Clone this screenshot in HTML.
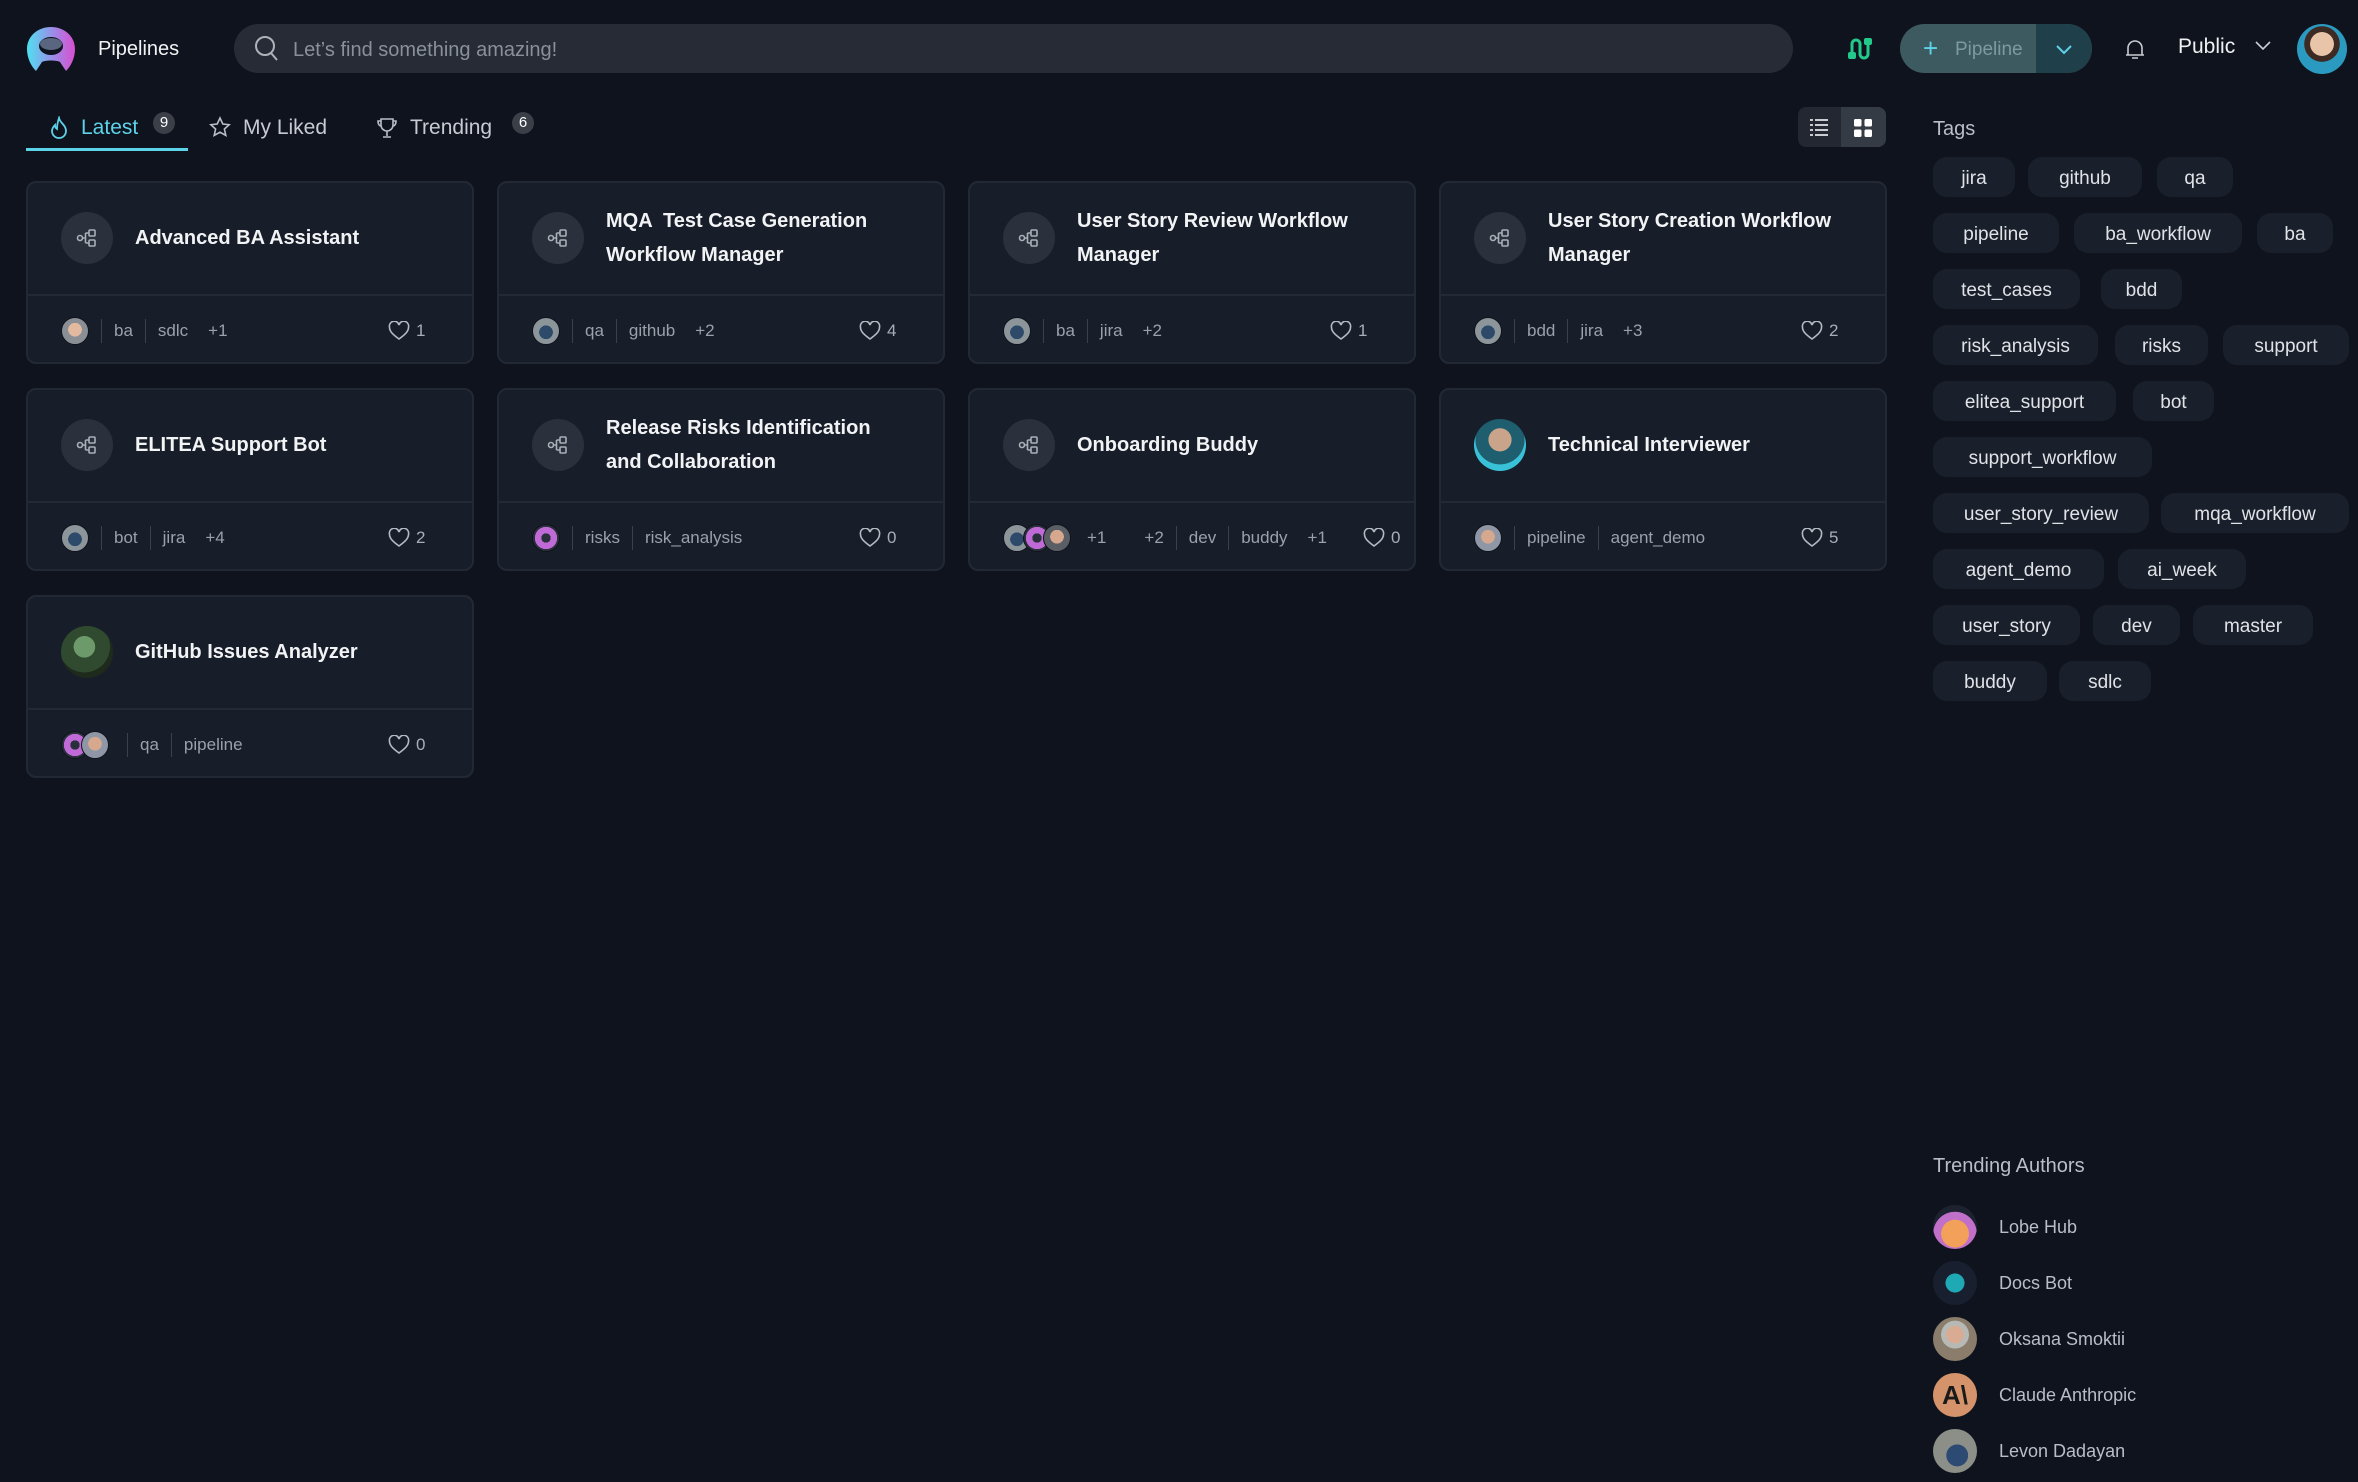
<!DOCTYPE html>
<html><head><meta charset="utf-8">
<style>
*{box-sizing:border-box;margin:0;padding:0}
html,body{width:2358px;height:1482px;background:#0f131d;overflow:hidden;font-family:"Liberation Sans",sans-serif;color:#e8eaed}
.abs{position:absolute}
.card{position:absolute;width:448px;height:183px;background:#181e29;border:2px solid #222935;border-radius:10px}
.card .div{position:absolute;left:0;right:0;top:111px;border-top:2px solid #232a35}
.ic{position:absolute;left:33px;top:29px;width:52px;height:52px;border-radius:50%;background:#2a313c;display:flex;align-items:center;justify-content:center}
.title{position:absolute;left:107px;top:0;height:110px;display:flex;align-items:center;font-size:20px;font-weight:bold;line-height:34px;color:#f2f3f5;width:320px}
.foot{position:absolute;left:33px;top:134px;height:28px;display:flex;align-items:center;font-size:17px;color:#9aa1ab}
.av{width:28px;height:28px;border-radius:50%;flex:none;border:1px solid #0f131d}
.sep{width:1px;height:24px;background:#3a414c;margin:0 12px}
.plus{margin-left:20px}
.heart{position:absolute;left:360px;top:134px;height:28px;display:flex;align-items:center;font-size:17px;color:#a8aeb7;gap:6px}
.chip{position:absolute;height:40px;border-radius:14px;background:#1a202b;font-size:19px;color:#dfe2e6;display:flex;align-items:center;justify-content:center;padding-top:3px}
.auth{position:absolute;left:1933px;display:flex;align-items:center;font-size:18px;color:#b9bec6}
.auth .a{width:44px;height:44px;border-radius:50%;margin-right:22px}
</style></head><body>
<svg width="0" height="0" style="position:absolute"><defs><symbol id="hrt" viewBox="0 0 22 20"><path d="M11 18C4 13 1.5 10 1.5 6.3A4.5 4.5 0 0 1 11 4a4.5 4.5 0 0 1 9.5 2.3C20.5 10 18 13 11 18z" fill="none" stroke="#b4bac2" stroke-width="1.6"/></symbol>
<symbol id="flo" viewBox="0 0 22 20"><g fill="none" stroke="#aab0b8" stroke-width="1.6"><circle cx="4" cy="10" r="2.5"/><rect x="13" y="2" width="6" height="6" rx="1"/><rect x="13" y="12" width="6" height="6" rx="1"/><path d="M6.5 10h3M9.5 5v10M9.5 5H13M9.5 15H13"/></g></symbol></defs></svg>

<!-- header -->
<svg class="abs" style="left:24px;top:24px" width="54" height="50" viewBox="0 0 54 50">
<defs><linearGradient id="lg" x1="0" x2="1"><stop offset="0" stop-color="#4fe0f0"/><stop offset=".55" stop-color="#9d8be8"/><stop offset="1" stop-color="#d94fd0"/></linearGradient></defs>
<path d="M27 3C14 3 3 12 3 25c0 9 4 17 9 22l6-9c3-2 15-2 18 0l6 9c5-5 9-13 9-22C51 12 40 3 27 3z" fill="url(#lg)"/>
<ellipse cx="27" cy="22" rx="12" ry="9" fill="#0f131d"/>
<ellipse cx="27" cy="20" rx="11" ry="6" fill="#6d7c9a" opacity=".8"/>
</svg>
<div class="abs" style="left:98px;top:38px;font-size:20px;color:#f1f2f4">Pipelines</div>
<div class="abs" style="left:234px;top:24px;width:1559px;height:49px;border-radius:25px;background:#262b35"></div>
<svg class="abs" style="left:254px;top:35px" width="26" height="28" viewBox="0 0 26 28"><circle cx="11" cy="11" r="9" fill="none" stroke="#aeb3ba" stroke-width="2"/><path d="M17 18l6 7" stroke="#aeb3ba" stroke-width="2"/></svg>
<div class="abs" style="left:293px;top:39px;font-size:20px;color:#8a9099">Let’s find something amazing!</div>
<svg class="abs" style="left:1846px;top:36px" width="26" height="26" viewBox="0 0 26 26"><path d="M6 22V8a4 4 0 0 1 8 0v10a4 4 0 0 0 8 0V4" fill="none" stroke="#22c98a" stroke-width="3"/><rect x="2" y="16" width="8" height="7" rx="2" fill="#22c98a"/><rect x="18" y="2" width="8" height="7" rx="2" fill="#22c98a"/></svg>
<div class="abs" style="left:1900px;top:24px;width:192px;height:49px;border-radius:25px;background:#3e5a61;overflow:hidden">
 <div class="abs" style="left:136px;top:0;width:56px;height:49px;background:#1f3f4a"></div>
 <div class="abs" style="left:23px;top:11px;font-size:26px;color:#5dd3ea;line-height:26px">+</div>
 <div class="abs" style="left:55px;top:15px;font-size:19px;color:#7d9aa1">Pipeline</div>
 <svg class="abs" style="left:155px;top:18px" width="18" height="14" viewBox="0 0 18 14"><path d="M2 4l7 7 7-7" fill="none" stroke="#5dd3ea" stroke-width="2"/></svg>
</div>
<svg class="abs" style="left:2124px;top:37px" width="22" height="24" viewBox="0 0 22 24"><path d="M4 18V11a7 7 0 0 1 14 0v7zM2 18h18M8 21h6" fill="none" stroke="#c9cdd2" stroke-width="1.6"/></svg>
<div class="abs" style="left:2178px;top:35px;font-size:21px;color:#eef0f2">Public</div>
<svg class="abs" style="left:2254px;top:40px" width="18" height="12" viewBox="0 0 18 12"><path d="M2 2l7 7 7-7" fill="none" stroke="#c9cdd2" stroke-width="1.6"/></svg>
<div class="abs" style="left:2297px;top:24px;width:50px;height:50px;border-radius:50%;background:radial-gradient(circle at 50% 40%,#e8c4a8 0 30%,#3d2a22 31% 45%,#2a9ac0 46%);"></div>

<!-- tabs -->
<svg class="abs" style="left:49px;top:116px" width="20" height="24" viewBox="0 0 20 24"><path d="M10 2c1 5 7 7 7 13a7 7 0 0 1-14 0c0-3 2-5 3-6 0 3 2 4 2 4 0-5 1-8 2-11z" fill="none" stroke="#5dd3ea" stroke-width="1.8"/></svg>
<div class="abs" style="left:81px;top:116px;font-size:21px;color:#5dd3ea">Latest</div>
<div class="abs" style="left:153px;top:112px;width:22px;height:22px;border-radius:50%;background:#3a3f48;font-size:15px;color:#fff;text-align:center;line-height:22px">9</div>
<div class="abs" style="left:26px;top:148px;width:162px;height:3px;background:#5dd3ea"></div>
<svg class="abs" style="left:209px;top:116px" width="22" height="22" viewBox="0 0 22 22"><path d="M11 2l2.8 6 6.4.7-4.8 4.3 1.4 6.4L11 16.2 5.2 19.4l1.4-6.4L1.8 8.7 8.2 8z" fill="none" stroke="#b9bec6" stroke-width="1.6"/></svg>
<div class="abs" style="left:243px;top:116px;font-size:21px;color:#c7cbd1">My Liked</div>
<svg class="abs" style="left:376px;top:116px" width="22" height="24" viewBox="0 0 22 24"><path d="M5 3h12v6a6 6 0 0 1-12 0zM5 5H2c0 4 2 5 3 5M17 5h3c0 4-2 5-3 5M11 15v5M7 21h8" fill="none" stroke="#b9bec6" stroke-width="1.6"/></svg>
<div class="abs" style="left:410px;top:116px;font-size:21px;color:#c7cbd1">Trending</div>
<div class="abs" style="left:512px;top:112px;width:22px;height:22px;border-radius:50%;background:#3a3f48;font-size:15px;color:#fff;text-align:center;line-height:22px">6</div>

<!-- view toggle -->
<div class="abs" style="left:1798px;top:107px;width:88px;height:40px;border-radius:8px;background:#222731;overflow:hidden"><div class="abs" style="left:43px;top:0;width:45px;height:40px;background:#353b45"></div>
<svg class="abs" style="left:12px;top:12px" width="20" height="17" viewBox="0 0 20 17"><g fill="#c9cdd2"><rect x="0" y="0" width="3" height="2"/><rect x="5" y="0" width="13" height="2"/><rect x="0" y="5" width="3" height="2"/><rect x="5" y="5" width="13" height="2"/><rect x="0" y="10" width="3" height="2"/><rect x="5" y="10" width="13" height="2"/><rect x="0" y="15" width="3" height="2"/><rect x="5" y="15" width="13" height="2"/></g></svg>
<svg class="abs" style="left:56px;top:12px" width="18" height="18" viewBox="0 0 18 18"><g fill="#fff"><rect width="7.5" height="7.5" rx="1.5"/><rect x="10.5" width="7.5" height="7.5" rx="1.5"/><rect y="10.5" width="7.5" height="7.5" rx="1.5"/><rect x="10.5" y="10.5" width="7.5" height="7.5" rx="1.5"/></g></svg></div>

<!-- Row 1 -->
<div class="card" style="left:26px;top:181px"><div class="ic"><svg width="22" height="20"><use href="#flo"/></svg></div><div class="title">Advanced BA Assistant</div><div class="div"></div>
<div class="foot"><div class="av" style="background:radial-gradient(circle at 50% 45%,#e3b9a0 0 35%,#8a8f96 36%)"></div><div class="sep"></div>ba<div class="sep"></div>sdlc<span class="plus">+1</span></div><div class="heart"><svg width="22" height="20"><use href="#hrt"/></svg><span>1</span></div></div>

<div class="card" style="left:497px;top:181px"><div class="ic"><svg width="22" height="20"><use href="#flo"/></svg></div><div class="title">MQA &nbsp;Test Case Generation Workflow Manager</div><div class="div"></div>
<div class="foot"><div class="av" style="background:radial-gradient(circle at 50% 55%,#2d4a6a 0 35%,#8c959a 36%)"></div><div class="sep"></div>qa<div class="sep"></div>github<span class="plus">+2</span></div><div class="heart"><svg width="22" height="20"><use href="#hrt"/></svg><span>4</span></div></div>

<div class="card" style="left:968px;top:181px"><div class="ic"><svg width="22" height="20"><use href="#flo"/></svg></div><div class="title">User Story Review Workflow Manager</div><div class="div"></div>
<div class="foot"><div class="av" style="background:radial-gradient(circle at 50% 55%,#2d4a6a 0 35%,#8c959a 36%)"></div><div class="sep"></div>ba<div class="sep"></div>jira<span class="plus">+2</span></div><div class="heart"><svg width="22" height="20"><use href="#hrt"/></svg><span>1</span></div></div>

<div class="card" style="left:1439px;top:181px"><div class="ic"><svg width="22" height="20"><use href="#flo"/></svg></div><div class="title">User Story Creation Workflow Manager</div><div class="div"></div>
<div class="foot"><div class="av" style="background:radial-gradient(circle at 50% 55%,#2d4a6a 0 35%,#8c959a 36%)"></div><div class="sep"></div>bdd<div class="sep"></div>jira<span class="plus">+3</span></div><div class="heart"><svg width="22" height="20"><use href="#hrt"/></svg><span>2</span></div></div>

<!-- Row 2 -->
<div class="card" style="left:26px;top:388px"><div class="ic"><svg width="22" height="20"><use href="#flo"/></svg></div><div class="title">ELITEA Support Bot</div><div class="div"></div>
<div class="foot"><div class="av" style="background:radial-gradient(circle at 50% 55%,#2d4a6a 0 35%,#8c959a 36%)"></div><div class="sep"></div>bot<div class="sep"></div>jira<span class="plus">+4</span></div><div class="heart"><svg width="22" height="20"><use href="#hrt"/></svg><span>2</span></div></div>

<div class="card" style="left:497px;top:388px"><div class="ic"><svg width="22" height="20"><use href="#flo"/></svg></div><div class="title" style="width:290px">Release Risks Identification and Collaboration</div><div class="div"></div>
<div class="foot"><div class="av" style="background:radial-gradient(circle,#2a303a 0 25%,#c06ad8 26% 60%,#2a303a 61%)"></div><div class="sep"></div>risks<div class="sep"></div>risk_analysis</div><div class="heart"><svg width="22" height="20"><use href="#hrt"/></svg><span>0</span></div></div>

<div class="card" style="left:968px;top:388px"><div class="ic"><svg width="22" height="20"><use href="#flo"/></svg></div><div class="title">Onboarding Buddy</div><div class="div"></div>
<div class="foot"><div class="av" style="background:radial-gradient(circle at 50% 55%,#2d4a6a 0 35%,#8c959a 36%)"></div><div class="av" style="margin-left:-8px;background:radial-gradient(circle,#2a303a 0 25%,#c06ad8 26% 60%,#2a303a 61%)"></div><div class="av" style="margin-left:-8px;background:radial-gradient(circle at 50% 45%,#d6a98e 0 35%,#5a5f66 36%)"></div><span style="margin-left:16px">+1</span><span style="margin-left:38px">+2</span><div class="sep"></div>dev<div class="sep"></div>buddy<span class="plus">+1</span></div><div class="heart" style="left:393px"><svg width="22" height="20"><use href="#hrt"/></svg><span>0</span></div></div>

<div class="card" style="left:1439px;top:388px"><div class="ic" style="background:radial-gradient(circle at 50% 40%,#c9a48a 0 28%,#1e5e6e 29% 60%,#39c1d8 61%)"></div><div class="title">Technical Interviewer</div><div class="div"></div>
<div class="foot"><div class="av" style="background:radial-gradient(circle at 50% 45%,#d6a98e 0 35%,#8f96a6 36%)"></div><div class="sep"></div>pipeline<div class="sep"></div>agent_demo</div><div class="heart"><svg width="22" height="20"><use href="#hrt"/></svg><span>5</span></div></div>

<!-- Row 3 -->
<div class="card" style="left:26px;top:595px"><div class="ic" style="background:radial-gradient(circle at 45% 40%,#6c9a6a 0 25%,#2f4a2e 26% 60%,#1d2a1c 61%)"></div><div class="title">GitHub Issues Analyzer</div><div class="div"></div>
<div class="foot"><div class="av" style="background:radial-gradient(circle,#2a303a 0 25%,#c06ad8 26% 60%,#2a303a 61%)"></div><div class="av" style="margin-left:-8px;background:radial-gradient(circle at 50% 45%,#d6a98e 0 35%,#8f96a6 36%)"></div><div class="sep" style="margin-left:18px"></div>qa<div class="sep"></div>pipeline</div><div class="heart"><svg width="22" height="20"><use href="#hrt"/></svg><span>0</span></div></div>

<!-- tags -->
<div class="abs" style="left:1933px;top:118px;font-size:20px;color:#b9bec6">Tags</div>
<div class="chip" style="left:1933px;top:157px;width:82px">jira</div>
<div class="chip" style="left:2028px;top:157px;width:114px">github</div>
<div class="chip" style="left:2157px;top:157px;width:76px">qa</div>
<div class="chip" style="left:1933px;top:213px;width:126px">pipeline</div>
<div class="chip" style="left:2074px;top:213px;width:168px">ba_workflow</div>
<div class="chip" style="left:2257px;top:213px;width:76px">ba</div>
<div class="chip" style="left:1933px;top:269px;width:147px">test_cases</div>
<div class="chip" style="left:2101px;top:269px;width:81px">bdd</div>
<div class="chip" style="left:1933px;top:325px;width:165px">risk_analysis</div>
<div class="chip" style="left:2115px;top:325px;width:93px">risks</div>
<div class="chip" style="left:2223px;top:325px;width:126px">support</div>
<div class="chip" style="left:1933px;top:381px;width:183px">elitea_support</div>
<div class="chip" style="left:2133px;top:381px;width:81px">bot</div>
<div class="chip" style="left:1933px;top:437px;width:219px">support_workflow</div>
<div class="chip" style="left:1933px;top:493px;width:216px">user_story_review</div>
<div class="chip" style="left:2161px;top:493px;width:188px">mqa_workflow</div>
<div class="chip" style="left:1933px;top:549px;width:171px">agent_demo</div>
<div class="chip" style="left:2118px;top:549px;width:128px">ai_week</div>
<div class="chip" style="left:1933px;top:605px;width:147px">user_story</div>
<div class="chip" style="left:2093px;top:605px;width:87px">dev</div>
<div class="chip" style="left:2193px;top:605px;width:120px">master</div>
<div class="chip" style="left:1933px;top:661px;width:114px">buddy</div>
<div class="chip" style="left:2059px;top:661px;width:92px">sdlc</div>

<!-- trending authors -->
<div class="abs" style="left:1933px;top:1155px;font-size:20px;color:#b9bec6">Trending Authors</div>
<div class="auth" style="top:1205px"><div class="a" style="background:radial-gradient(circle at 50% 65%,#f3a05a 0 38%,#c070c8 39% 60%,#1c2230 61%)"></div>Lobe Hub</div>
<div class="auth" style="top:1261px"><div class="a" style="background:radial-gradient(circle,#1fa9b5 0 30%,#182030 31%)"></div>Docs Bot</div>
<div class="auth" style="top:1317px"><div class="a" style="background:radial-gradient(circle at 50% 40%,#d9ab92 0 25%,#b7b9b5 26% 40%,#8a7d6b 41%)"></div>Oksana Smoktii</div>
<div class="auth" style="top:1373px"><div class="a" style="background:#d4936a;color:#1a1a1a;font-weight:bold;font-size:26px;display:flex;align-items:center;justify-content:center">A\</div>Claude Anthropic</div>
<div class="auth" style="top:1429px"><div class="a" style="background:radial-gradient(circle at 55% 60%,#2c4a72 0 30%,#8b8f88 31%)"></div>Levon Dadayan</div>
</body></html>
